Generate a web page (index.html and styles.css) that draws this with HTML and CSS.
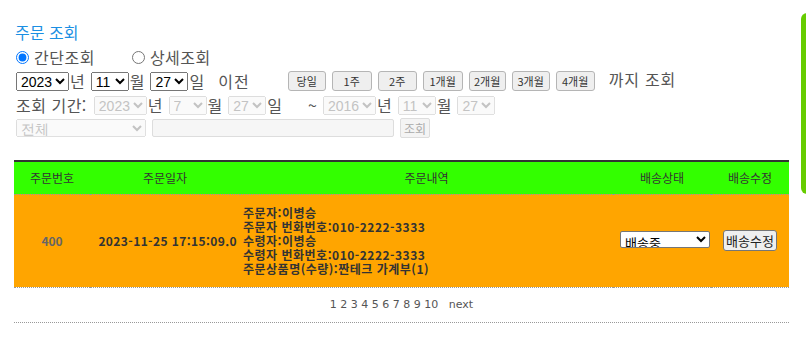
FILE: index.html
```html
<!DOCTYPE html>
<html lang="ko">
<head>
  <meta charset="UTF-8" />
  <title>주문 조회</title>
  <link rel="stylesheet" href="styles.css">
</head>
<body>
  <div id="wrap">
    <h3 class="title">주문 조회</h3>

    <div class="row radio-row">
      <label class="radio"><input type="radio" name="mode" checked /> 간단조회</label>
      <label class="radio second"><input type="radio" name="mode" /> 상세조회</label>
    </div>

    <div class="row date-row">
      <select class="sel-year"><option>2023</option></select><span class="unit">년</span>
      <select class="sel-small"><option>11</option></select><span class="unit">월</span>
      <select class="sel-small"><option>27</option></select><span class="unit">일</span>
      <span class="before">이전</span>
      <div class="quick">
        <button class="qbtn w38">당일</button>
        <button class="qbtn w40">1주</button>
        <button class="qbtn w39">2주</button>
        <button class="qbtn w40">1개월</button>
        <button class="qbtn w37">2개월</button>
        <button class="qbtn w38">3개월</button>
        <button class="qbtn w39">4개월</button>
      </div>
      <span class="until">까지 조회</span>
    </div>

    <div class="row period-row">
      <span class="label">조회 기간:</span>
      <select class="sel-year" disabled><option>2023</option></select><span class="unit">년</span>
      <select class="sel-small" disabled><option>7</option></select><span class="unit">월</span>
      <select class="sel-small" disabled><option>27</option></select><span class="unit">일</span>
      <span class="tilde">~</span>
      <select class="sel-year" disabled><option>2016</option></select><span class="unit">년</span>
      <select class="sel-small" disabled><option>11</option></select><span class="unit">월</span>
      <select class="sel-small" disabled><option>27</option></select>
    </div>

    <div class="row search-row">
      <select class="sel-type" disabled><option>전체</option></select>
      <input type="text" class="keyword" disabled />
      <button class="search-btn" disabled>조회</button>
    </div>

    <table class="orders">
      <thead>
        <tr>
          <th class="c-no">주문번호</th>
          <th class="c-date">주문일자</th>
          <th class="c-detail">주문내역</th>
          <th class="c-state">배송상태</th>
          <th class="c-edit">배송수정</th>
        </tr>
      </thead>
      <tbody>
        <tr>
          <td class="c-no num">400</td>
          <td class="c-date strong">2023-11-25 17:15:09.0</td>
          <td class="c-detail strong left">
            주문자:이병승<br>
            주문자 번화번호:010-2222-3333<br>
            수령자:이병승<br>
            수령자 번화번호:010-2222-3333<br>
            주문상품명(수량):짠테크 가계부(1)
          </td>
          <td class="c-state">
            <select class="state-sel"><option>배송중</option></select>
          </td>
          <td class="c-edit"><button class="edit-btn">배송수정</button></td>
        </tr>
      </tbody>
    </table>

    <div class="paging">1 2 3 4 5 6 7 8 9 10 &nbsp; next</div>
  </div>

  <div class="side-tab"></div>
</body>
</html>
```

FILE: styles.css
```css
* {
  box-sizing: border-box;
}

body {
  margin: 0;
  background: #fff;
  font-family: "Noto Sans CJK KR", "Noto Sans", sans-serif;
  color: #444;
  overflow: hidden;
}

#wrap {
  padding: 20px 0 0 14px;
  width: 790px;
}

.title {
  margin: 0 0 0 1px;
  font-size: 16px;
  font-weight: normal;
  line-height: 24px;
  color: #1b8fe3;
}

.row {
  display: flex;
  align-items: center;
  font-size: 16px;
  color: #555;
}

.radio-row {
  height: 22px;
  margin-top: 2px;
}

.radio {
  display: flex;
  align-items: center;
  gap: 5px;
  letter-spacing: 0.5px;
}

.radio input {
  margin: 0 0 0 2px;
  width: 13px;
  height: 13px;
}

.radio.second {
  margin-left: 35px;
}

select {
  font-family: "Liberation Sans", Arial, sans-serif;
  font-size: 14px;
  height: 19px;
  padding: 0;
  color: #000;
}

select:disabled {
  color: #aaa;
}

.date-row {
  height: 24px;
  margin-top: 1px;
  padding-left: 2px;
}

.sel-year {
  width: 53px;
}

.sel-small {
  width: 38px;
}

.unit {
  margin: 0 6px 0 1px;
}

.before {
  margin-left: 8px;
  letter-spacing: 1px;
}

.quick {
  display: flex;
  gap: 6px;
  margin-left: 38px;
}

.qbtn {
  height: 20px;
  padding: 0;
  font-family: "Noto Sans CJK KR", sans-serif;
  font-size: 11px;
  color: #333;
  background: #efefef;
  border: 1px solid #b5b5b5;
  border-radius: 3px;
  margin-top: -1px;
}

.w37 { width: 37px; }
.w38 { width: 38px; }
.w39 { width: 39px; }
.w40 { width: 40px; }

.until {
  margin-left: 14px;
  margin-top: -4px;
  letter-spacing: 0.8px;
}

.period-row {
  height: 24px;
  padding-left: 2px;
}

.period-row .label {
  margin-right: 7px;
  letter-spacing: 0.5px;
}

.period-row .unit {
  margin: 0 6px 0 1px;
}

.tilde {
  margin: 0 6px 0 20px;
}

.search-row {
  height: 22px;
  padding-left: 2px;
}

.sel-type {
  width: 130px;
  height: 18px;
}

.keyword {
  width: 242px;
  height: 18px;
  margin-left: 6px;
  border: 1px solid #ddd;
  background: #f6f6f6;
  border-radius: 2px;
}

.search-btn {
  height: 20px;
  width: 30px;
  margin-left: 6px;
  padding: 0;
  font-size: 12px;
  color: #aaa;
  background: #f4f4f4;
  border: 1px solid #ddd;
  border-radius: 2px;
  font-family: "Noto Sans CJK KR", sans-serif;
}

.orders {
  margin-top: 21px;
  width: 775px;
  border-collapse: collapse;
  border-top: 2px solid #333;
  font-size: 12px;
}

.orders th {
  background: #33ff00;
  height: 33px;
  font-weight: normal;
  color: #333;
  border-bottom: 1px dotted #999;
  padding: 0;
}

.orders td {
  background: #ffa500;
  height: 93px;
  text-align: center;
  border-bottom: 1px dotted #999;
  padding: 0;
  color: #333;
}

.c-no { width: 76px; }
.c-date { width: 150px; }
.c-detail { width: 373px; }
.c-state { width: 98px; }
.c-edit { width: 78px; }

.orders td.num {
  color: #666;
  font-weight: bold;
}

.orders td.strong {
  font-weight: bold;
  line-height: 14px;
  letter-spacing: 0.5px;
}

.orders td.c-date {
  text-align: right;
  padding-right: 3px;
  letter-spacing: 0.4px;
}

.orders td.left {
  text-align: left;
  padding-left: 3px;
  padding-top: 1px;
}

.state-sel {
  width: 90px;
  height: 17px;
  margin-left: 6px;
  font-family: "Noto Sans CJK KR", sans-serif;
  font-size: 13px;
  background: #fff;
  border: 1px solid #767676;
  border-radius: 2px;
}

.edit-btn {
  height: 21px;
  padding: 0 2px;
  font-family: "Noto Sans CJK KR", sans-serif;
  font-size: 13px;
  color: #222;
  background: #efefef;
  border: 1px solid #767676;
  border-radius: 3px;
}

.paging {
  width: 775px;
  text-align: center;
  font-family: "DejaVu Sans", sans-serif;
  font-size: 11px;
  color: #555;
  padding: 10px 0 11px;
  border-bottom: 1px dotted #999;
}

.side-tab {
  position: absolute;
  left: 801px;
  top: 13px;
  width: 12px;
  height: 181px;
  background: #66cc00;
  border-radius: 7px;
}
```
